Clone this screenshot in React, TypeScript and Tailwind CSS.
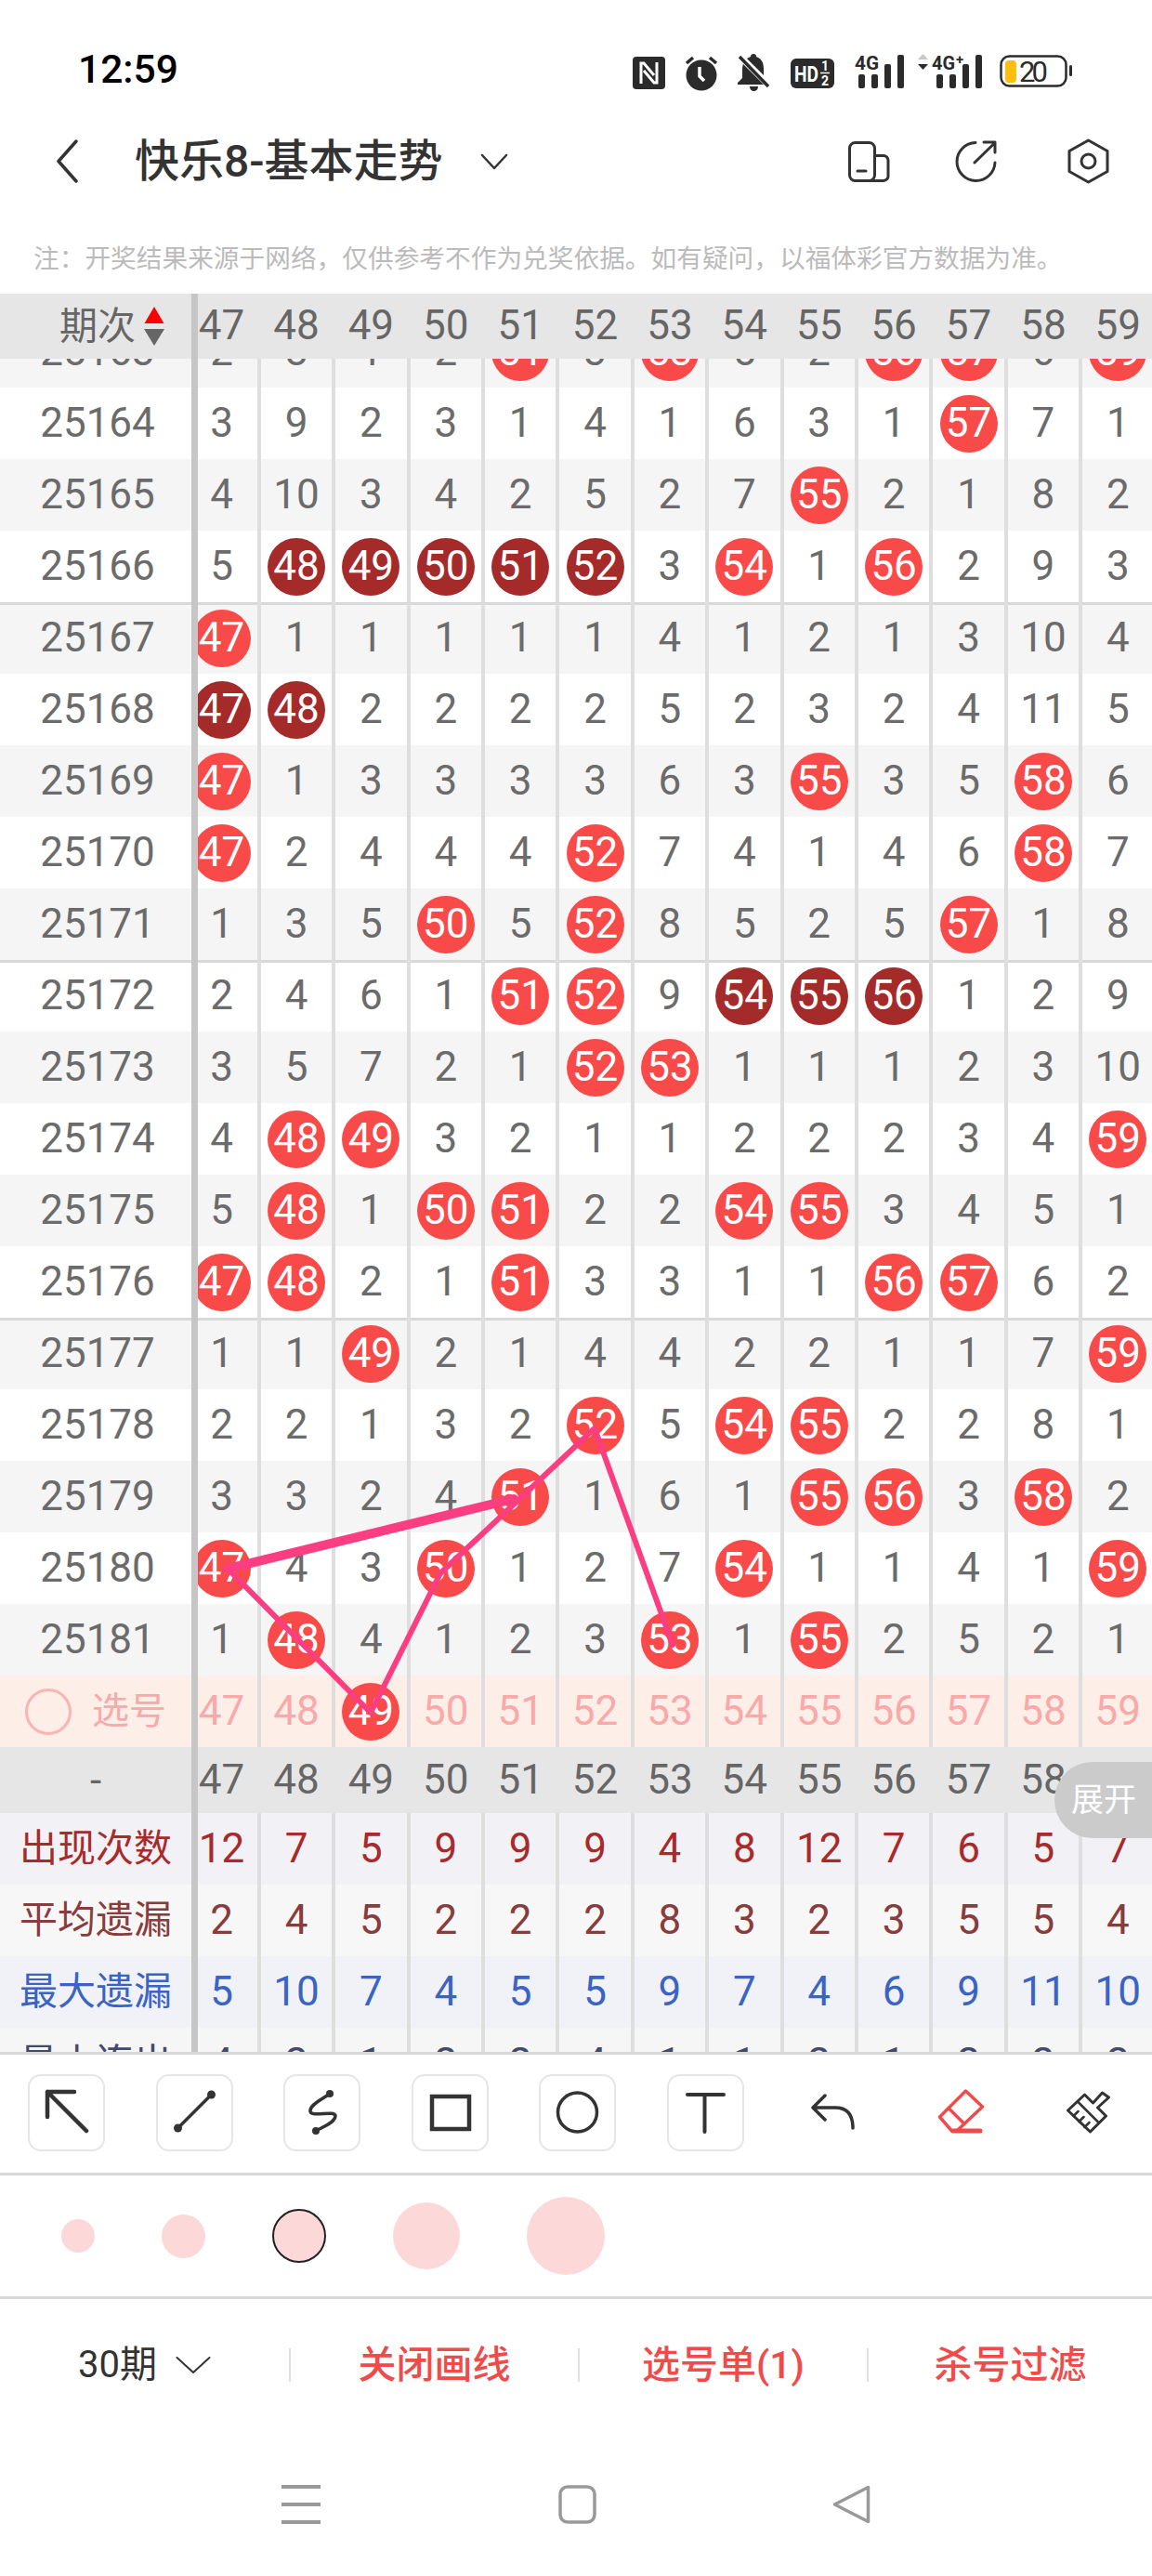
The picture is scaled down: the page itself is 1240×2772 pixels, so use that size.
import React from 'react';

const DATA: [string, string][] = [
  ['25163', '2 8 1 2 r51 3 r53 5 2 r56 r57 6 r59'],
  ['25164', '3 9 2 3 1 4 1 6 3 1 r57 7 1'],
  ['25165', '4 10 3 4 2 5 2 7 r55 2 1 8 2'],
  ['25166', '5 d48 d49 d50 d51 d52 3 r54 1 r56 2 9 3'],
  ['25167', 'r47 1 1 1 1 1 4 1 2 1 3 10 4'],
  ['25168', 'd47 d48 2 2 2 2 5 2 3 2 4 11 5'],
  ['25169', 'r47 1 3 3 3 3 6 3 r55 3 5 r58 6'],
  ['25170', 'r47 2 4 4 4 r52 7 4 1 4 6 r58 7'],
  ['25171', '1 3 5 r50 5 r52 8 5 2 5 r57 1 8'],
  ['25172', '2 4 6 1 r51 r52 9 d54 d55 d56 1 2 9'],
  ['25173', '3 5 7 2 1 r52 r53 1 1 1 2 3 10'],
  ['25174', '4 r48 r49 3 2 1 1 2 2 2 3 4 r59'],
  ['25175', '5 r48 1 r50 r51 2 2 r54 r55 3 4 5 1'],
  ['25176', 'r47 r48 2 1 r51 3 3 1 1 r56 r57 6 2'],
  ['25177', '1 1 r49 2 1 4 4 2 2 1 1 7 r59'],
  ['25178', '2 2 1 3 2 r52 5 r54 r55 2 2 8 1'],
  ['25179', '3 3 2 4 r51 1 6 1 r55 r56 3 r58 2'],
  ['25180', 'r47 4 3 r50 1 2 7 r54 1 1 4 1 r59'],
  ['25181', '1 r48 4 1 2 3 r53 1 r55 2 5 2 1'],
];
const NUMS = '47 48 49 50 51 52 53 54 55 56 57 58 59';
const NOTE = '\u6CE8\uFF1A\u5F00\u5956\u7ED3\u679C\u6765\u6E90\u4E8E\u7F51\u7EDC\uFF0C\u4EC5\u4F9B\u53C2\u8003\u4E0D\u4F5C\u4E3A\u5151\u5956\u4F9D\u636E\u3002\u5982\u6709\u7591\u95EE\uFF0C\u4EE5\u798F\u4F53\u5F69\u5B98\u65B9\u6570\u636E\u4E3A\u51C6\u3002';

function Cell({ v, lined = true }: { v: string; lined?: boolean }) {
  const kind = v[0];
  const isBall = kind === 'r' || kind === 'd';
  return (
    <div className={lined ? 'flex-none w-[80.4px] h-full flex items-center justify-center border-x-2 border-[#dedede]' : 'flex-none w-[80.4px] h-full flex items-center justify-center'}>
      {isBall ? (
        <span className={kind === 'r' ? 'w-[62px] h-[62px] pb-[2px] rounded-full flex items-center justify-center bg-[#f94a4a] text-white' : 'w-[62px] h-[62px] pb-[2px] rounded-full flex items-center justify-center bg-[#a52a2a] text-white'}>
          {v.slice(1)}
        </span>
      ) : (
        <span className="mb-[2px]">{v}</span>
      )}
    </div>
  );
}

function Cells({ text, lined = true }: { text: string; lined?: boolean }) {
  return (
    <div className="flex-1 h-full overflow-hidden">
      <div className="flex h-full w-[1100px] ml-[-14.6px]">
        {text.split(' ').map((v, i) => (
          <Cell key={i} v={v} lined={lined} />
        ))}
      </div>
    </div>
  );
}

function Sep() {
  return <div className="flex-none w-[7px] h-full bg-[#c6c6c6]" />;
}

function DataRow({ no, text, idx }: { no: string; text: string; idx: number }) {
  const gray = idx % 2 === 0;
  const group = idx % 5 === 4 && idx > 0;
  const bg = gray ? 'bg-[#f5f5f5]' : 'bg-white';
  return (
    <div className={`flex h-[77px] items-center text-[44px] leading-none text-[#6b6b6b] ${bg} ${group ? 'shadow-[inset_0_3px_0_#d8d8d8]' : ''}`}>
      <div className="flex-none w-[206px] pl-[4px] mb-[2px] text-center">{no}</div>
      <Sep />
      <Cells text={text} />
    </div>
  );
}

function StatRow({ label, text, rowClass }: { label: string; text: string; rowClass: string }) {
  return (
    <div className={`flex h-[77px] flex-none items-center text-[44px] leading-none ${rowClass}`}>
      <div className="flex-none w-[206px] text-center text-[41px]">{label}</div>
      <Sep />
      <Cells text={text} />
    </div>
  );
}

const S = { fill: 'none', stroke: '#333', strokeLinecap: 'round', strokeLinejoin: 'round' } as const;

function StatusBar() {
  const dark = '#2b2b2b';
  return (
    <div className="flex h-[150px] flex-none items-center pl-[84px] pr-[86px] text-black">
      <div className="text-[42.5px] font-medium leading-none">12:59</div>
      <div className="ml-auto flex items-start pt-[5px]">
        <svg width="35" height="35" viewBox="0 0 35 35" className="mt-[3px]">
          <rect width="35" height="35" rx="4" fill={dark} />
          <path d="M9 29V7h3l11 13M26 6v22h-3L12 15" fill="none" stroke="#fff" strokeWidth="3" />
        </svg>
        <svg width="38" height="40" viewBox="0 0 38 40" className="ml-[20px]">
          <circle cx="19" cy="23" r="16.5" fill={dark} />
          <path d="M3 10l7-6M35 10l-7-6" stroke={dark} strokeWidth="3.5" />
          <path d="M17 14v10l5 5" fill="none" stroke="#fff" strokeWidth="3.5" />
        </svg>
        <svg width="35" height="40" viewBox="0 0 35 40" className="ml-[20px]">
          <path d="M17 0c2 0 3 1 3 3 6 2 8 7 8 13v9l6 6v2H0v-2l5-5v-9c0-7 3-12 9-14 0-2 1-3 3-3z" fill={dark} />
          <path d="M13 35h9c0 3-2 5-4.500 5s-4.500-2-4.500-5z" fill={dark} />
          <path d="M1 1l33 33" stroke="#fff" strokeWidth="7" />
          <path d="M2 3l31 32" stroke={dark} strokeWidth="3.500" />
        </svg>
        <svg width="47" height="32" viewBox="0 0 47 32" className="ml-[22px] mt-[5px]">
          <rect width="47" height="32" rx="6" fill={dark} />
          <text x="4" y="25" fontSize="24" fontWeight="700" fill="#fff" fontFamily="Roboto" textLength="26" lengthAdjust="spacingAndGlyphs">HD</text>
          <text x="37" y="13" fontSize="14" fontWeight="700" fill="#fff" fontFamily="Roboto" textAnchor="middle">1</text>
          <path d="M32 15.500h10" stroke="#fff" strokeWidth="1.500" />
          <text x="37" y="29" fontSize="14" fontWeight="700" fill="#fff" fontFamily="Roboto" textAnchor="middle">2</text>
        </svg>
        <svg width="53" height="37" viewBox="0 0 53 37" className="ml-[22px]">
          <text x="0" y="17" fontSize="21" fontWeight="700" fill={dark} fontFamily="Roboto" textLength="26" lengthAdjust="spacingAndGlyphs">4G</text>
          <rect x="4" y="22" width="7" height="15" rx="2" fill={dark} />
          <rect x="18" y="22" width="7" height="15" rx="2" fill={dark} />
          <rect x="32" y="11" width="7" height="26" rx="2" fill={dark} />
          <rect x="46" y="1" width="7" height="36" rx="2" fill={dark} />
        </svg>
        <svg width="70" height="37" viewBox="0 0 70 37" className="ml-[14px]">
          <path d="M1 6l5.500-6L12 6z" fill="#c9c9c9" />
          <path d="M1 11h11l-5.500 6z" fill={dark} />
          <text x="16" y="17" fontSize="21" fontWeight="700" fill={dark} fontFamily="Roboto" textLength="25" lengthAdjust="spacingAndGlyphs">4G</text>
          <text x="42" y="11" fontSize="15" fontWeight="700" fill={dark} fontFamily="Roboto">+</text>
          <rect x="21" y="22" width="7" height="15" rx="2" fill={dark} />
          <rect x="35" y="22" width="7" height="15" rx="2" fill={dark} />
          <rect x="49" y="11" width="7" height="26" rx="2" fill={dark} />
          <rect x="63" y="1" width="7" height="36" rx="2" fill={dark} />
        </svg>
        <svg width="78" height="36" viewBox="0 0 78 36" className="ml-[19px]">
          <rect x="1.500" y="2.500" width="70" height="32" rx="9" fill="none" stroke={dark} strokeWidth="2.500" />
          <rect x="6" y="7" width="12" height="24" rx="4" fill="#ffbf10" />
          <text x="21" y="30" fontSize="31" fill={dark} fontFamily="Roboto" textLength="31">20</text>
          <rect x="75" y="12" width="3" height="12" rx="1.500" fill={dark} />
        </svg>
      </div>
    </div>
  );
}

function TitleBar() {
  return (
    <div className="flex h-[47px] flex-none items-center pl-[59px] pr-[46px] text-[#333]">
      <svg width="26" height="47" viewBox="0 0 26 47">
        <path d="M23 2L4 23.500 23 45" {...S} strokeWidth="3.500" />
      </svg>
      <div className="ml-[60px] text-[48px] font-medium leading-none whitespace-nowrap">快乐8-基本走势</div>
      <svg width="30" height="18" viewBox="0 0 30 18" className="ml-[40px]">
        <path d="M2 2l13 14L28 2" {...S} strokeWidth="2.500" />
      </svg>
      <svg width="45" height="44" viewBox="0 0 45 44" className="ml-auto">
        <rect x="1.500" y="1.500" width="27" height="41" rx="6" {...S} strokeWidth="3" />
        <path d="M28.500 15.500H38a5 5 0 0 1 5 5V37a5 5 0 0 1-5 5.500H22M10 32h9" {...S} strokeWidth="3" />
      </svg>
      <svg width="45" height="45" viewBox="0 0 45 45" className="ml-[70px]">
        <path d="M22 2.500A20.500 20.500 0 1 0 43 24" {...S} strokeWidth="3" />
        <path d="M21 24L43 2.500M31 2h12v11" {...S} strokeWidth="3" />
      </svg>
      <svg width="45" height="49" viewBox="0 0 45 49" className="ml-[76px]">
        <path d="M22.500 2L43 13.500v22L22.500 47 2 35.500v-22z" {...S} strokeWidth="3" />
        <circle cx="22.500" cy="24.500" r="7.500" {...S} strokeWidth="3" />
      </svg>
    </div>
  );
}

function Overlay() {
  const c = '#fb3d82';
  return (
    <svg width="1240" height="1822" viewBox="0 0 1240 1822" className="absolute left-0 top-0 pointer-events-none">
      <path d="M245 1302L553 1227" fill="none" stroke={c} strokeWidth="10" strokeLinecap="round" />
      <path d="M245 1302L399 1457L474 1307L640 1151L724 1384" fill="none" stroke={c} strokeWidth="6" strokeLinecap="round" strokeLinejoin="round" />
    </svg>
  );
}

function Table() {
  return (
    <>
      <div className="flex h-[70px] flex-none items-center bg-[#e6e6e6] text-[44px] leading-none text-[#666]">
        <div className="flex w-[206px] flex-none items-center pl-[64px]">
          <span className="text-[41px]">期次</span>
          <svg width="22" height="42" viewBox="0 0 22 42" className="ml-[9px]">
            <path d="M11 0l10.500 18H.5z" fill="#f00" />
            <path d="M0 24h22L11 42z" fill="#666" />
          </svg>
        </div>
        <Sep />
        <Cells text={NUMS} lined={false} />
      </div>
      <div className="relative h-[1822px] flex-none overflow-hidden">
        <div className="mt-[-46px] flex flex-col">
          {DATA.map(([no, text], i) => (
            <DataRow key={no} no={no} text={text} idx={i} />
          ))}
          <div className="flex h-[77px] flex-none items-center bg-[#fdeee8] text-[44px] leading-none text-[#f9a9a9]">
            <div className="flex w-[206px] flex-none items-center pl-[27px]">
              <span className="h-[50px] w-[50px] rounded-full border-[3px] border-[#fbb4b4]" />
              <span className="ml-[22px] text-[40px]">选号</span>
            </div>
            <Sep />
            <Cells text="47 48 r49 50 51 52 53 54 55 56 57 58 59" />
          </div>
          <div className="flex h-[71px] flex-none items-center bg-[#e6e6e6] text-[44px] leading-none text-[#666]">
            <div className="w-[206px] flex-none text-center">-</div>
            <Sep />
            <Cells text={NUMS} lined={false} />
          </div>
          <StatRow label="出现次数" text="12 7 5 9 9 9 4 8 12 7 6 5 7" rowClass="bg-[#f1f1f6] text-[#a82a2a]" />
          <StatRow label="平均遗漏" text="2 4 5 2 2 2 8 3 2 3 5 5 4" rowClass="bg-[#f7f7f7] text-[#883c3c]" />
          <StatRow label="最大遗漏" text="5 10 7 4 5 5 9 7 4 6 9 11 10" rowClass="bg-[#f1f2f8] text-[#3a64c4]" />
          <StatRow label="最小连出" text="4 2 1 2 2 4 1 1 2 1 2 2 2" rowClass="bg-[#f6f6f6] text-[#3f4a6e]" />
        </div>
        <Overlay />
        <div className="absolute right-0 top-[1510px] flex h-[82px] w-[105px] items-center pl-[18px] rounded-l-[41px] bg-[#cbcbcb] text-[35px] leading-none text-white">
          展开
        </div>
      </div>
    </>
  );
}

function ToolBtn({ children, boxed = true }: { children: React.ReactNode; boxed?: boolean }) {
  return (
    <div className={boxed ? 'h-[83px] w-[83px] flex-none rounded-[14px] border-2 border-[#e6e6e6]' : 'h-[83px] w-[83px] flex-none border-2 border-transparent'}>
      <svg width="83" height="83" viewBox="0 0 83 83" className="ml-[-2px] mt-[-2px]">
        {children}
      </svg>
    </div>
  );
}

function Toolbar() {
  const dk = '#333';
  const red = '#f04b4b';
  return (
    <div className="flex h-[133px] flex-none items-start gap-[54.5px] border-y-[3px] border-[#d8d8d8] pl-[30px] pt-[21px]">
      <ToolBtn>
        <path d="M50 19H21v27M21 19l42 42" {...S} strokeWidth="4.500" />
      </ToolBtn>
      <ToolBtn>
        <path d="M23.500 58L59.500 22" {...S} strokeWidth="3.500" />
        <circle cx="23.500" cy="58" r="4.500" fill={dk} />
        <circle cx="59.500" cy="22" r="4.500" fill={dk} />
      </ToolBtn>
      <ToolBtn>
        <path d="M50 21C42 27 28 33 29 40C30 47 56 38 56 45C56 52 42 57 35 61" {...S} strokeWidth="3.500" />
        <circle cx="50" cy="21" r="4" fill={dk} />
        <circle cx="35" cy="61" r="4" fill={dk} />
      </ToolBtn>
      <ToolBtn>
        <rect x="22" y="24" width="40" height="35" fill="none" stroke={dk} strokeWidth="4.500" />
      </ToolBtn>
      <ToolBtn>
        <circle cx="41.500" cy="41" r="21" {...S} strokeWidth="3.500" />
      </ToolBtn>
      <ToolBtn>
        <path d="M22 22h39M40.500 22v40" {...S} strokeWidth="4" />
      </ToolBtn>
      <ToolBtn boxed={false}>
        <path d="M33 23L20 36l13 13M20 36h24c13 0 19 8 19 22" {...S} strokeWidth="3.500" />
      </ToolBtn>
      <ToolBtn boxed={false}>
        <path d="M46.500 18L64.500 35 37 61H31.500L18.500 46zM28.500 37L44.500 53" fill="none" stroke={red} strokeWidth="3.500" strokeLinejoin="round" strokeLinecap="round" />
        <path d="M33 61H62" fill="none" stroke={red} strokeWidth="5" strokeLinecap="round" />
      </ToolBtn>
      <ToolBtn boxed={false}>
        <g transform="translate(19.500 19)">
          <path d="M18 3L27 12 37 1 44 6 32 17 41 26 24 43 0 20z" {...S} strokeWidth="3" />
          <path d="M11 11L33 33M6 26l5-5M12 32l5-5M18 38l5-5" {...S} strokeWidth="2.500" />
        </g>
      </ToolBtn>
    </div>
  );
}

function Dots() {
  return (
    <div className="flex h-[133px] flex-none items-center gap-[72px] border-b-[3px] border-[#d8d8d8] pl-[66px]">
      <span className="h-[36px] w-[36px] rounded-full bg-[#fdd8d8]" />
      <span className="h-[47px] w-[47px] rounded-full bg-[#fdd8d8]" />
      <span className="h-[58px] w-[58px] rounded-full border-2 border-[#222] bg-[#fdd8d8]" />
      <span className="h-[72px] w-[72px] rounded-full bg-[#fdd8d8]" />
      <span className="h-[84px] w-[84px] rounded-full bg-[#fdd8d8]" />
    </div>
  );
}

function Actions() {
  return (
    <div className="flex h-[142px] flex-none items-center text-[41px] font-medium leading-none text-[#f04b4b]">
      <div className="flex w-[311px] flex-none items-center pl-[84px] text-[40px] font-normal text-[#333]">
        <span>30期</span>
        <svg width="38" height="20" viewBox="0 0 38 20" className="ml-[20px]">
          <path d="M1.500 2L19 18 36.500 2" {...S} strokeWidth="2" />
        </svg>
      </div>
      <div className="h-[36px] w-[2px] flex-none bg-[#e0e0e0]" />
      <div className="w-[309px] flex-none text-center">关闭画线</div>
      <div className="h-[36px] w-[2px] flex-none bg-[#e0e0e0]" />
      <div className="w-[309px] flex-none text-center">选号单(1)</div>
      <div className="h-[36px] w-[2px] flex-none bg-[#e0e0e0]" />
      <div className="flex-1 text-center">杀号过滤</div>
    </div>
  );
}

function NavBar() {
  return (
    <div className="flex flex-1 items-start justify-start pl-[303px] pt-[58px]">
      <svg width="42" height="42" viewBox="0 0 42 42">
        <path d="M0 2h42M0 21h42M0 40h42" stroke="#999" strokeWidth="4" />
      </svg>
      <svg width="41" height="42" viewBox="0 0 41 42" className="ml-[256px]">
        <rect x="2" y="2" width="37" height="38" rx="8" fill="none" stroke="#999" strokeWidth="3.500" />
      </svg>
      <svg width="41" height="42" viewBox="0 0 41 42" className="ml-[254px]">
        <path d="M38.500 2.500L2.500 21 38.500 39.500z" fill="none" stroke="#999" strokeWidth="3.500" strokeLinejoin="round" />
      </svg>
    </div>
  );
}

export default function App() {
  return (
    <div className="flex h-[2772px] w-[1240px] flex-col overflow-hidden bg-white font-[Roboto,'Noto_Sans_CJK_SC',sans-serif]">
      <StatusBar />
      <TitleBar />
      <div className="flex h-[119px] flex-none items-end pb-[17px] pl-[36px] text-[27.7px] leading-[40px] text-[#bbb] whitespace-nowrap">
        {NOTE}
      </div>
      <Table />
      <Toolbar />
      <Dots />
      <Actions />
      <NavBar />
    </div>
  );
}
